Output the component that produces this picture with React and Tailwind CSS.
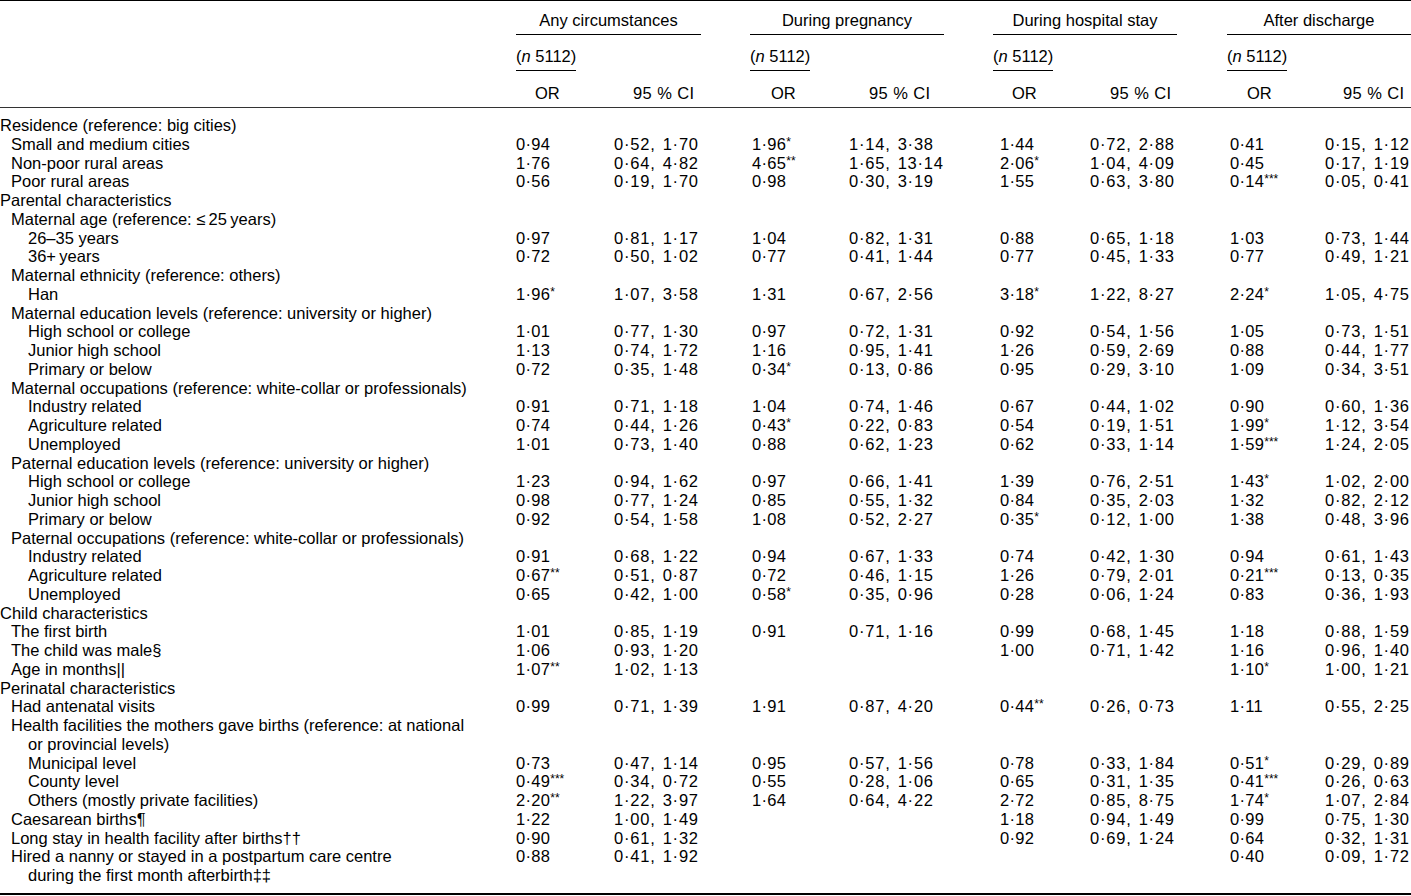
import React from "react";

const rows = [
  { l: "Residence (reference: big cities)", i: 0 },
  { l: "Small and medium cities", i: 1, v: ["0·94", "0·52, 1·70", "1·96*", "1·14, 3·38", "1·44", "0·72, 2·88", "0·41", "0·15, 1·12"] },
  { l: "Non-poor rural areas", i: 1, v: ["1·76", "0·64, 4·82", "4·65**", "1·65, 13·14", "2·06*", "1·04, 4·09", "0·45", "0·17, 1·19"] },
  { l: "Poor rural areas", i: 1, v: ["0·56", "0·19, 1·70", "0·98", "0·30, 3·19", "1·55", "0·63, 3·80", "0·14***", "0·05, 0·41"] },
  { l: "Parental characteristics", i: 0 },
  { l: "Maternal age (reference: \u2264\u200925\u2009years)", i: 1 },
  { l: "26–35 years", i: 2, v: ["0·97", "0·81, 1·17", "1·04", "0·82, 1·31", "0·88", "0·65, 1·18", "1·03", "0·73, 1·44"] },
  { l: "36+\u2009years", i: 2, v: ["0·72", "0·50, 1·02", "0·77", "0·41, 1·44", "0·77", "0·45, 1·33", "0·77", "0·49, 1·21"] },
  { l: "Maternal ethnicity (reference: others)", i: 1 },
  { l: "Han", i: 2, v: ["1·96*", "1·07, 3·58", "1·31", "0·67, 2·56", "3·18*", "1·22, 8·27", "2·24*", "1·05, 4·75"] },
  { l: "Maternal education levels (reference: university or higher)", i: 1 },
  { l: "High school or college", i: 2, v: ["1·01", "0·77, 1·30", "0·97", "0·72, 1·31", "0·92", "0·54, 1·56", "1·05", "0·73, 1·51"] },
  { l: "Junior high school", i: 2, v: ["1·13", "0·74, 1·72", "1·16", "0·95, 1·41", "1·26", "0·59, 2·69", "0·88", "0·44, 1·77"] },
  { l: "Primary or below", i: 2, v: ["0·72", "0·35, 1·48", "0·34*", "0·13, 0·86", "0·95", "0·29, 3·10", "1·09", "0·34, 3·51"] },
  { l: "Maternal occupations (reference: white-collar or professionals)", i: 1 },
  { l: "Industry related", i: 2, v: ["0·91", "0·71, 1·18", "1·04", "0·74, 1·46", "0·67", "0·44, 1·02", "0·90", "0·60, 1·36"] },
  { l: "Agriculture related", i: 2, v: ["0·74", "0·44, 1·26", "0·43*", "0·22, 0·83", "0·54", "0·19, 1·51", "1·99*", "1·12, 3·54"] },
  { l: "Unemployed", i: 2, v: ["1·01", "0·73, 1·40", "0·88", "0·62, 1·23", "0·62", "0·33, 1·14", "1·59***", "1·24, 2·05"] },
  { l: "Paternal education levels (reference: university or higher)", i: 1 },
  { l: "High school or college", i: 2, v: ["1·23", "0·94, 1·62", "0·97", "0·66, 1·41", "1·39", "0·76, 2·51", "1·43*", "1·02, 2·00"] },
  { l: "Junior high school", i: 2, v: ["0·98", "0·77, 1·24", "0·85", "0·55, 1·32", "0·84", "0·35, 2·03", "1·32", "0·82, 2·12"] },
  { l: "Primary or below", i: 2, v: ["0·92", "0·54, 1·58", "1·08", "0·52, 2·27", "0·35*", "0·12, 1·00", "1·38", "0·48, 3·96"] },
  { l: "Paternal occupations (reference: white-collar or professionals)", i: 1 },
  { l: "Industry related", i: 2, v: ["0·91", "0·68, 1·22", "0·94", "0·67, 1·33", "0·74", "0·42, 1·30", "0·94", "0·61, 1·43"] },
  { l: "Agriculture related", i: 2, v: ["0·67**", "0·51, 0·87", "0·72", "0·46, 1·15", "1·26", "0·79, 2·01", "0·21***", "0·13, 0·35"] },
  { l: "Unemployed", i: 2, v: ["0·65", "0·42, 1·00", "0·58*", "0·35, 0·96", "0·28", "0·06, 1·24", "0·83", "0·36, 1·93"] },
  { l: "Child characteristics", i: 0 },
  { l: "The first birth", i: 1, v: ["1·01", "0·85, 1·19", "0·91", "0·71, 1·16", "0·99", "0·68, 1·45", "1·18", "0·88, 1·59"] },
  { l: "The child was male§", i: 1, v: ["1·06", "0·93, 1·20", "", "", "1·00", "0·71, 1·42", "1·16", "0·96, 1·40"] },
  { l: "Age in months||", i: 1, v: ["1·07**", "1·02, 1·13", "", "", "", "", "1·10*", "1·00, 1·21"] },
  { l: "Perinatal characteristics", i: 0 },
  { l: "Had antenatal visits", i: 1, v: ["0·99", "0·71, 1·39", "1·91", "0·87, 4·20", "0·44**", "0·26, 0·73", "1·11", "0·55, 2·25"] },
  { l: "Health facilities the mothers gave births (reference: at national", l2: "or provincial levels)", i: 1 },
  { l: "Municipal level", i: 2, v: ["0·73", "0·47, 1·14", "0·95", "0·57, 1·56", "0·78", "0·33, 1·84", "0·51*", "0·29, 0·89"] },
  { l: "County level", i: 2, v: ["0·49***", "0·34, 0·72", "0·55", "0·28, 1·06", "0·65", "0·31, 1·35", "0·41***", "0·26, 0·63"] },
  { l: "Others (mostly private facilities)", i: 2, v: ["2·20**", "1·22, 3·97", "1·64", "0·64, 4·22", "2·72", "0·85, 8·75", "1·74*", "1·07, 2·84"] },
  { l: "Caesarean births¶", i: 1, v: ["1·22", "1·00, 1·49", "", "", "1·18", "0·94, 1·49", "0·99", "0·75, 1·30"] },
  { l: "Long stay in health facility after births††", i: 1, v: ["0·90", "0·61, 1·32", "", "", "0·92", "0·69, 1·24", "0·64", "0·32, 1·31"] },
  { l: "Hired a nanny or stayed in a postpartum care centre", l2: "during the first month afterbirth‡‡", i: 1, v: ["0·88", "0·41, 1·92", "", "", "", "", "0·40", "0·09, 1·72"] },
];

const cellW = [
  "w-[98px]",
  "w-[136px]",
  "w-[99px]",
  "w-[144px]",
  "w-[97px]",
  "w-[137px]",
  "w-[98px]",
  "w-[86px]",
];
const cellPad = ["pl-0", "pl-0", "pl-[2px]", "pl-0", "pl-[7px]", "pl-0", "pl-[3px]", "pl-0"];
const indent = ["pl-0", "pl-[11px]", "pl-[28px]"];

function OrVal({ s }) {
  const m = s.match(/^([^*]*)(\**)$/);
  const base = m ? m[1] : s;
  const stars = m ? m[2] : "";
  return (
    <span className="tracking-[0.3px]">
      {base}
      {stars && <span className="text-[12px] leading-none align-[4px] tracking-normal">{stars}</span>}
    </span>
  );
}

function CiVal({ s }) {
  const [a, b] = s.split(", ");
  return (
    <span className="tracking-[0.8px]">
      {a},<span className="inline-block w-[7px]" />
      {b}
    </span>
  );
}

function N() {
  return (
    <span>
      (<i>n</i> 5112)
    </span>
  );
}

export default function App() {
  const groups = [
    { t: "Any circumstances", w: "w-[185px]" },
    { t: "During pregnancy", w: "w-[194px]" },
    { t: "During hospital stay", w: "w-[184px]" },
    { t: "After discharge", w: "w-[184px]" },
  ];
  const gaps = ["w-[49px]", "w-[49px]", "w-[50px]"];
  return (
    <div
      className="w-[1411px] h-[896px] bg-white text-black overflow-hidden text-[16.5px] leading-[18.75px]"
      style={{ fontFamily: '"Liberation Sans", Arial, Helvetica, sans-serif' }}
    >
      <div className="border-t border-black">
        {/* header row 1 */}
        <div className="flex h-[34px]">
          <div className="w-[516px] shrink-0" />
          {groups.map((g, k) => (
            <React.Fragment key={g.t}>
              <div className={`${g.w} shrink-0 flex items-end justify-center pb-[4px] border-b border-black`}>
                {g.t}
              </div>
              {k < 3 && <div className={`${gaps[k]} shrink-0`} />}
            </React.Fragment>
          ))}
        </div>
        {/* header row 2 */}
        <div className="flex h-[36px]">
          <div className="w-[516px] shrink-0" />
          {[0, 1, 2, 3].map((k) => (
            <div
              key={k}
              className={`shrink-0 flex ${k === 0 ? "w-[234px]" : k === 1 ? "w-[243px]" : k === 2 ? "w-[234px]" : "w-[184px]"}`}
            >
              <div className="flex items-end pb-[4px] border-b border-black">
                <N />
              </div>
            </div>
          ))}
        </div>
        {/* header row 3 */}
        <div className="flex h-[37px] items-end pb-[4px] border-b-[1.5px] border-[#333]">
          <div className="w-[516px] shrink-0" />
          <div className="w-[98px] shrink-0 pl-[19px]">OR</div>
          <div className="w-[136px] shrink-0 pl-[19px] tracking-[0.4px] whitespace-nowrap">95 % CI</div>
          <div className="w-[99px] shrink-0 pl-[21px]">OR</div>
          <div className="w-[144px] shrink-0 pl-[20px] tracking-[0.4px] whitespace-nowrap">95 % CI</div>
          <div className="w-[97px] shrink-0 pl-[19px]">OR</div>
          <div className="w-[137px] shrink-0 pl-[20px] tracking-[0.4px] whitespace-nowrap">95 % CI</div>
          <div className="w-[98px] shrink-0 pl-[20px]">OR</div>
          <div className="w-[86px] shrink-0 pl-[18px] tracking-[0.4px] whitespace-nowrap">95 % CI</div>
        </div>
      </div>
      {/* body */}
      <div className="pt-[8px] pb-[8px] border-b-2 border-black">
        {rows.map((r, idx) => (
          <div key={idx} className="flex">
            <div className={`w-[516px] shrink-0 ${indent[r.i]}`}>
              <div className="whitespace-nowrap">{r.l}</div>
              {r.l2 && <div className="whitespace-nowrap pl-[17px]">{r.l2}</div>}
            </div>
            {cellW.map((w, c) => (
              <div key={c} className={`${w} shrink-0 whitespace-nowrap ${cellPad[c]}`}>
                {r.v && r.v[c] ? c % 2 === 0 ? <OrVal s={r.v[c]} /> : <CiVal s={r.v[c]} /> : null}
              </div>
            ))}
          </div>
        ))}
      </div>
    </div>
  );
}
